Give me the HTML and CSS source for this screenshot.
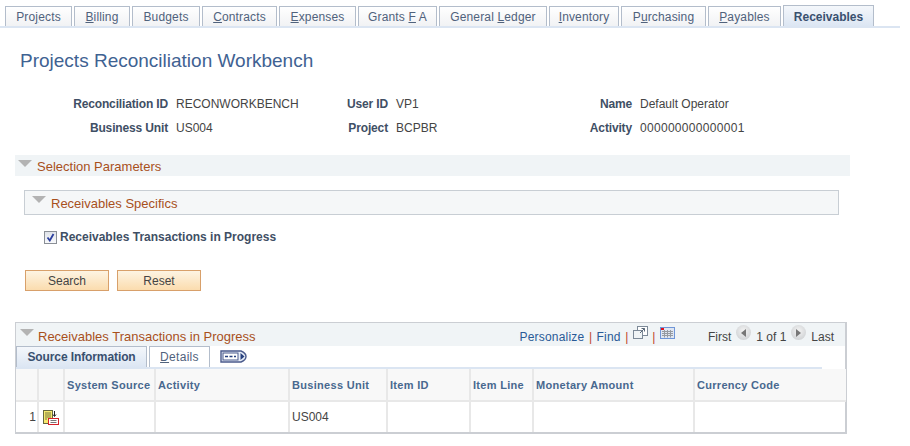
FILE: index.html
```html
<!DOCTYPE html>
<html lang="en">
<head>
    <meta charset="UTF-8">
    <title>Projects Reconciliation Workbench</title>
    <link rel="stylesheet" href="styles.css">
</head>
<body>
    <ul class="tabs">
        <li>Pro<u>j</u>ects</li>
        <li><u>B</u>illing</li>
        <li>Bud<u>g</u>ets</li>
        <li><u>C</u>ontracts</li>
        <li><u>E</u>xpenses</li>
        <li>Grants <u>F</u> A</li>
        <li>General <u>L</u>edger</li>
        <li><u>I</u>nventory</li>
        <li>P<u>u</u>rchasing</li>
        <li><u>P</u>ayables</li>
        <li class="active">Receivables</li>
    </ul>

    <h1 class="page-title">Projects Reconciliation Workbench</h1>

    <div class="info">
        <span class="label">Reconciliation ID</span><span>RECONWORKBENCH</span>
        <span class="label">User ID</span><span>VP1</span>
        <span class="label">Name</span><span>Default Operator</span>
        <span class="label">Business Unit</span><span>US004</span>
        <span class="label">Project</span><span>BCPBR</span>
        <span class="label">Activity</span><span class="digits">000000000000001</span>
    </div>

    <div class="section-bar">
        <span class="arrow"></span>
        <span class="section-title">Selection Parameters</span>
    </div>

    <div class="sub-bar">
        <span class="arrow"></span>
        <span class="section-title">Receivables Specifics</span>
    </div>

    <label class="check">
        <span class="checkbox">
            <svg width="9" height="9" viewBox="0 0 9 9"><path d="M1.5 4.5 L3.8 7.5 L7.5 1" fill="none" stroke="#2b3f9e" stroke-width="1.8"/></svg>
        </span>
        Receivables Transactions in Progress
    </label>

    <div class="buttons">
        <button class="btn">Search</button>
        <button class="btn">Reset</button>
    </div>

    <div class="grid">
        <div class="grid-head">
            <span class="arrow"></span>
            <span class="section-title">Receivables Transactions in Progress</span>
            <div class="grid-nav">
                <a href="#">Personalize</a>
                <span class="sep">|</span>
                <a href="#">Find</a>
                <span class="sep">|</span>
                <svg class="nav-icon" width="15" height="13" viewBox="0 0 15 13">
                    <rect x="4.500" y="0.500" width="10" height="9" fill="#fff" stroke="#7d8a98"/>
                    <rect x="0.500" y="4.500" width="9" height="8" fill="#f0f4f6" stroke="#7d8a98"/>
                    <path d="M7 7 L11.500 2.500 M8.500 2.500 H11.500 V5.500" fill="none" stroke="#5a6878"/>
                </svg>
                <span class="sep">|</span>
                <svg class="nav-icon" width="15" height="12" viewBox="0 0 15 12">
                    <rect x="0.500" y="0.500" width="14" height="11" fill="#dfe6f2" stroke="#6f96d8"/>
                    <path d="M2 4.500 H13 M2 6.500 H13 M2 8.500 H13 M4.500 3 V10.500 M7.500 3 V10.500 M10.500 3 V10.500" stroke="#969ba2"/>
                    <rect x="1" y="1" width="3" height="2" fill="#e0101c"/>
                </svg>
                <div class="pager">
                    <span>First</span>
                    <span class="round"><i class="left"></i></span>
                    <span>1 of 1</span>
                    <span class="round"><i class="right"></i></span>
                    <span>Last</span>
                </div>
            </div>
        </div>

        <div class="grid-tabs">
            <span class="grid-tab active">Source Information</span>
            <span class="grid-tab details"><u>D</u>etails</span>
            <svg class="show-all" width="27" height="13" viewBox="0 0 27 13">
                <path d="M1 1 H21 Q26 3 26 6.500 Q26 10 21 12 H1 Z" fill="#e8eef8" stroke="#4a5a8c" stroke-width="1.400"/>
                <rect x="3" y="3" width="15" height="7" fill="#fff" stroke="#4a5a8c"/>
                <path d="M5 6.500 H16" stroke="#27407e" stroke-width="1.400" stroke-dasharray="3 1.500"/>
                <path d="M20.500 3 L24.500 6.500 L20.500 10 Z" fill="#27407e"/>
            </svg>
        </div>

        <table class="data">
            <colgroup>
                <col class="c-num"><col class="c-icon"><col class="c-src"><col class="c-act"><col class="c-bu">
                <col class="c-item"><col class="c-line"><col class="c-amt"><col class="c-cur">
            </colgroup>
            <thead>
                <tr>
                    <th></th><th></th><th>System Source</th><th>Activity</th><th>Business Unit</th>
                    <th>Item ID</th><th>Item Line</th><th>Monetary Amount</th><th>Currency Code</th>
                </tr>
            </thead>
            <tbody>
                <tr>
                    <td class="num">1</td>
                    <td class="row-icon">
                        <svg width="16" height="15" viewBox="0 0 16 15">
                            <rect x="0.500" y="0.500" width="9" height="13" fill="#f6e96e" stroke="#66683f"/>
                            <path d="M2 3 H8 M2 5 H8 M2 7 H8 M2 9 H4" stroke="#77763f"/>
                            <path d="M11.500 1 V6 M10 4.500 L11.500 6.500 L13 4.500" fill="none" stroke="#222"/>
                            <rect x="5.500" y="8.500" width="10" height="6" fill="#fff" stroke="#d4232b"/>
                            <path d="M7.500 10.500 H13.500 M7.500 12.500 H13.500" stroke="#777"/>
                        </svg>
                    </td>
                    <td></td><td></td><td>US004</td><td></td><td></td><td></td><td></td>
                </tr>
            </tbody>
        </table>
    </div>
</body>
</html>
```

FILE: styles.css
```css
body {
    margin: 0;
    font-family: "Liberation Sans", Arial, sans-serif;
    font-size: 12px;
    color: #444;
    background: #fff;
}

.tabs {
    list-style: none;
    display: grid;
    grid-template-columns: 67px 56px 68px 75px 77px 79px 108px 70px 85px 73px 91px;
    align-items: end;
    gap: 2px;
    width: 895px;
    margin: 0;
    padding: 5px 0 0 5px;
    border-bottom: 2px solid #dbe5f2;
}

.tabs li {
    box-sizing: border-box;
    height: 20px;
    padding-top: 3px;
    border: 1px solid #b3bdcb;
    border-bottom: none;
    background: linear-gradient(#fff, #f1f2f4);
    color: #50627c;
    line-height: 15px;
    letter-spacing: 0.15px;
    text-align: center;
}

.tabs li.active {
    height: 21px;
    padding-top: 4px;
    background: linear-gradient(#f4f7fb, #dce6f3);
    font-weight: bold;
    color: #39506f;
    letter-spacing: 0;
}

.page-title {
    margin: 21px 0 0 20px;
    font-size: 19px;
    font-weight: normal;
    line-height: 24px;
    color: #3f6292;
}

.info {
    display: grid;
    grid-template-columns: 168px 124px 96px 148px 96px auto;
    row-gap: 9px;
    margin-top: 24px;
    line-height: 15px;
}

.info span:nth-child(even) {
    padding-left: 8px;
}

.label {
    font-weight: bold;
    text-align: right;
    letter-spacing: -0.15px;
    color: #3f4f65;
}

.digits {
    letter-spacing: 0.3px;
}

.section-bar {
    display: flex;
    width: 835px;
    height: 21px;
    margin: 19px 0 0 15px;
    background: #f0f4f6;
}

.sub-bar {
    display: flex;
    box-sizing: border-box;
    width: 815px;
    height: 25px;
    margin: 14px 0 0 24px;
    border: 1px solid #c8ced4;
    background: #f5f7f8;
}

.arrow {
    width: 0;
    height: 0;
    margin: 5px 5px 0 3px;
    border-left: 7px solid transparent;
    border-right: 7px solid transparent;
    border-top: 7px solid #b3b3b3;
}

.sub-bar .arrow {
    margin: 5px 5px 0 7px;
}

.section-title {
    font-size: 13px;
    line-height: 24px;
    color: #a8501c;
}

.sub-bar .section-title {
    line-height: 26px;
}

.check {
    display: flex;
    align-items: center;
    gap: 3px;
    margin: 15px 0 0 44px;
    font-weight: bold;
    color: #3f4f65;
    line-height: 15px;
}

.checkbox {
    box-sizing: border-box;
    display: flex;
    align-items: center;
    justify-content: center;
    width: 13px;
    height: 13px;
    border: 1px solid #8a8f96;
    background: linear-gradient(#dfe3ea, #f8f9fb);
}

.buttons {
    display: flex;
    gap: 8px;
    margin: 25px 0 0 25px;
}

.btn {
    width: 84px;
    height: 21px;
    padding: 0;
    border: 1px solid #d8a06a;
    background: linear-gradient(#fdf4e3, #fbdcae);
    font-family: inherit;
    font-size: 12px;
    color: #444;
}

.grid {
    box-sizing: border-box;
    width: 832px;
    margin: 31px 0 0 15px;
    border: 1px solid #cbced3;
    border-right-width: 2px;
    border-bottom-width: 2px;
}

.grid-head {
    display: flex;
    height: 23px;
    background: #f0f4f6;
}

.grid-head .arrow {
    margin: 6px 4px 0 4px;
}

.grid-head .section-title {
    line-height: 27px;
}

.grid-nav {
    display: flex;
    align-items: center;
    gap: 4.5px;
    margin-left: auto;
    padding: 4px 11px 0 0;
}

.grid-nav a {
    color: #2a5a96;
    text-decoration: none;
    letter-spacing: 0.2px;
}

.sep {
    color: #c0452c;
}

.nav-icon {
    margin-top: -8px;
}

.pager {
    display: flex;
    align-items: center;
    gap: 5px;
    margin-left: 28.5px;
}

.round {
    display: flex;
    align-items: center;
    justify-content: center;
    width: 15px;
    height: 15px;
    margin-top: -8px;
    border-radius: 50%;
    background: radial-gradient(circle at 50% 40%, #f4f4f4, #c6c9cc);
}

.round i {
    width: 0;
    height: 0;
    border-top: 4px solid transparent;
    border-bottom: 4px solid transparent;
}

.round .left {
    border-right: 5px solid #777;
}

.round .right {
    border-left: 5px solid #777;
}

.grid-tabs {
    display: flex;
    align-items: flex-end;
    gap: 2px;
    width: 806px;
    height: 21px;
    border-bottom: 2px solid #dbe5f2;
}

.grid-tab {
    box-sizing: border-box;
    width: 131px;
    height: 21px;
    border: 1px solid #b3bdcb;
    border-bottom: none;
    background: linear-gradient(#f4f7fb, #dce6f3);
    font-weight: bold;
    color: #39506f;
    line-height: 20px;
    text-align: center;
    letter-spacing: -0.1px;
}

.grid-tab.details {
    width: 61px;
    background: #fff;
    font-weight: normal;
    color: #50627c;
    letter-spacing: 0.3px;
}

.show-all {
    align-self: center;
    margin-left: 8px;
}

.data {
    width: 830px;
    border-collapse: collapse;
    table-layout: fixed;
}

.c-num { width: 22px; }
.c-icon { width: 26px; }
.c-src { width: 91px; }
.c-act { width: 134px; }
.c-bu { width: 98px; }
.c-item { width: 83px; }
.c-line { width: 63px; }
.c-amt { width: 161px; }

.data th {
    height: 31px;
    padding: 0 2px;
    border-right: 2px solid #e8e8e8;
    border-bottom: 2px solid #e8e8e8;
    background: #f8f8f8;
    font-size: 11px;
    text-align: left;
    letter-spacing: 0.3px;
    color: #48688f;
}

.data td {
    height: 27px;
    padding: 0 2px;
    border-right: 2px solid #e8e8e8;
}

.data th:last-child,
.data td:last-child {
    border-right: none;
}

.data .num {
    padding-right: 1px;
    text-align: right;
}

.data .row-icon {
    padding: 3px 0 0 4px;
}
```
